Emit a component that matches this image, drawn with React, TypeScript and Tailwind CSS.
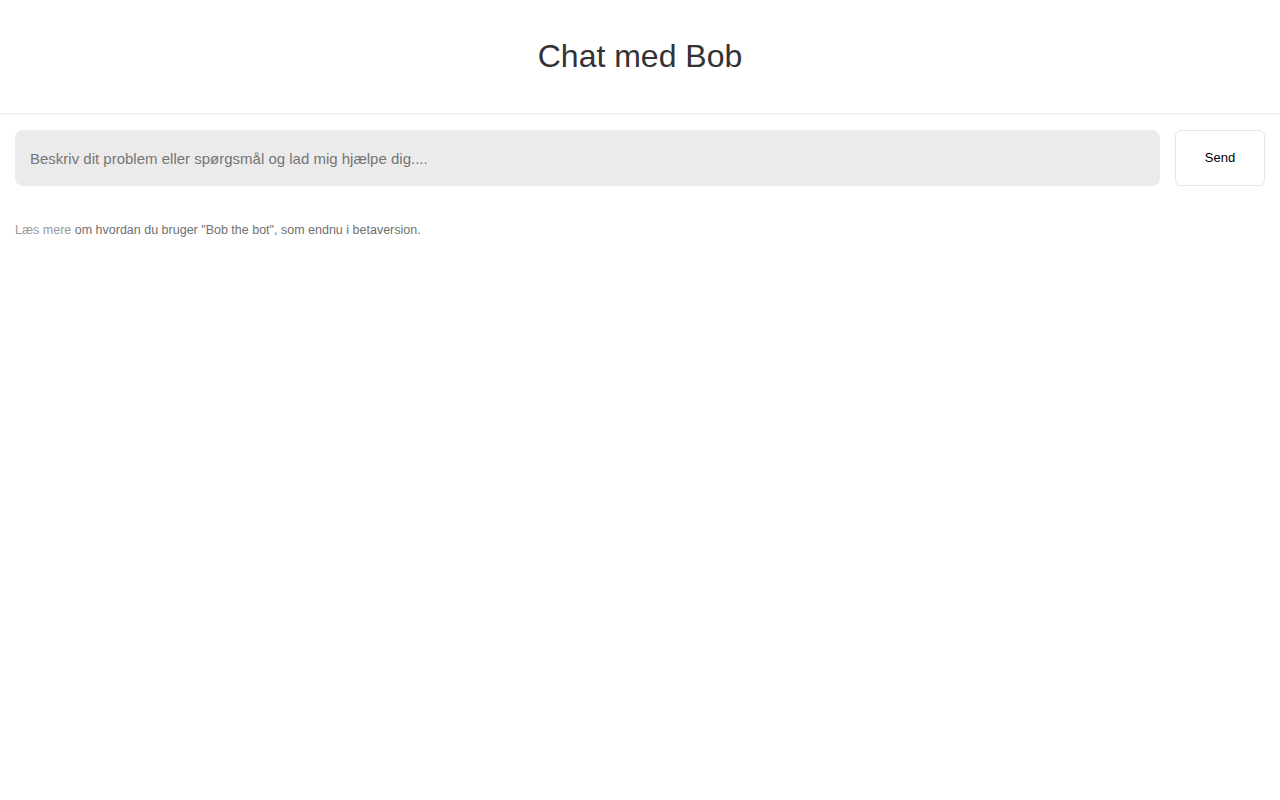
export default function App() {
  return (
    <div className="min-h-screen bg-white font-['Liberation_Sans',Arial,sans-serif]">
      <header className="h-[113px] flex items-center justify-center pb-[2px] bg-white shadow-[0_1px_2px_rgba(0,0,0,0.1)]">
        <h1 className="text-[32px] text-[#333333] leading-none">Chat med Bob</h1>
      </header>

      <div className="px-[15px] pt-[17px]">
        <div className="flex gap-[15px]">
          <input
            type="text"
            placeholder="Beskriv dit problem eller spørgsmål og lad mig hjælpe dig...."
            className="flex-1 h-[56px] rounded-lg bg-[#ebebeb] px-[15px] text-[15px] text-[#333] placeholder:text-[#757575] outline-none"
          />
          <button className="w-[90px] h-[56px] rounded-md border border-[#e6e6e6] bg-white text-[13px] text-black">
            Send
          </button>
        </div>

        <p className="mt-[35px] text-[12.5px] text-[#707070]">
          <a href="#" className="text-[#999999]">Læs mere</a> om hvordan du bruger "Bob the bot", som endnu i betaversion.
        </p>
      </div>
    </div>
  );
}
